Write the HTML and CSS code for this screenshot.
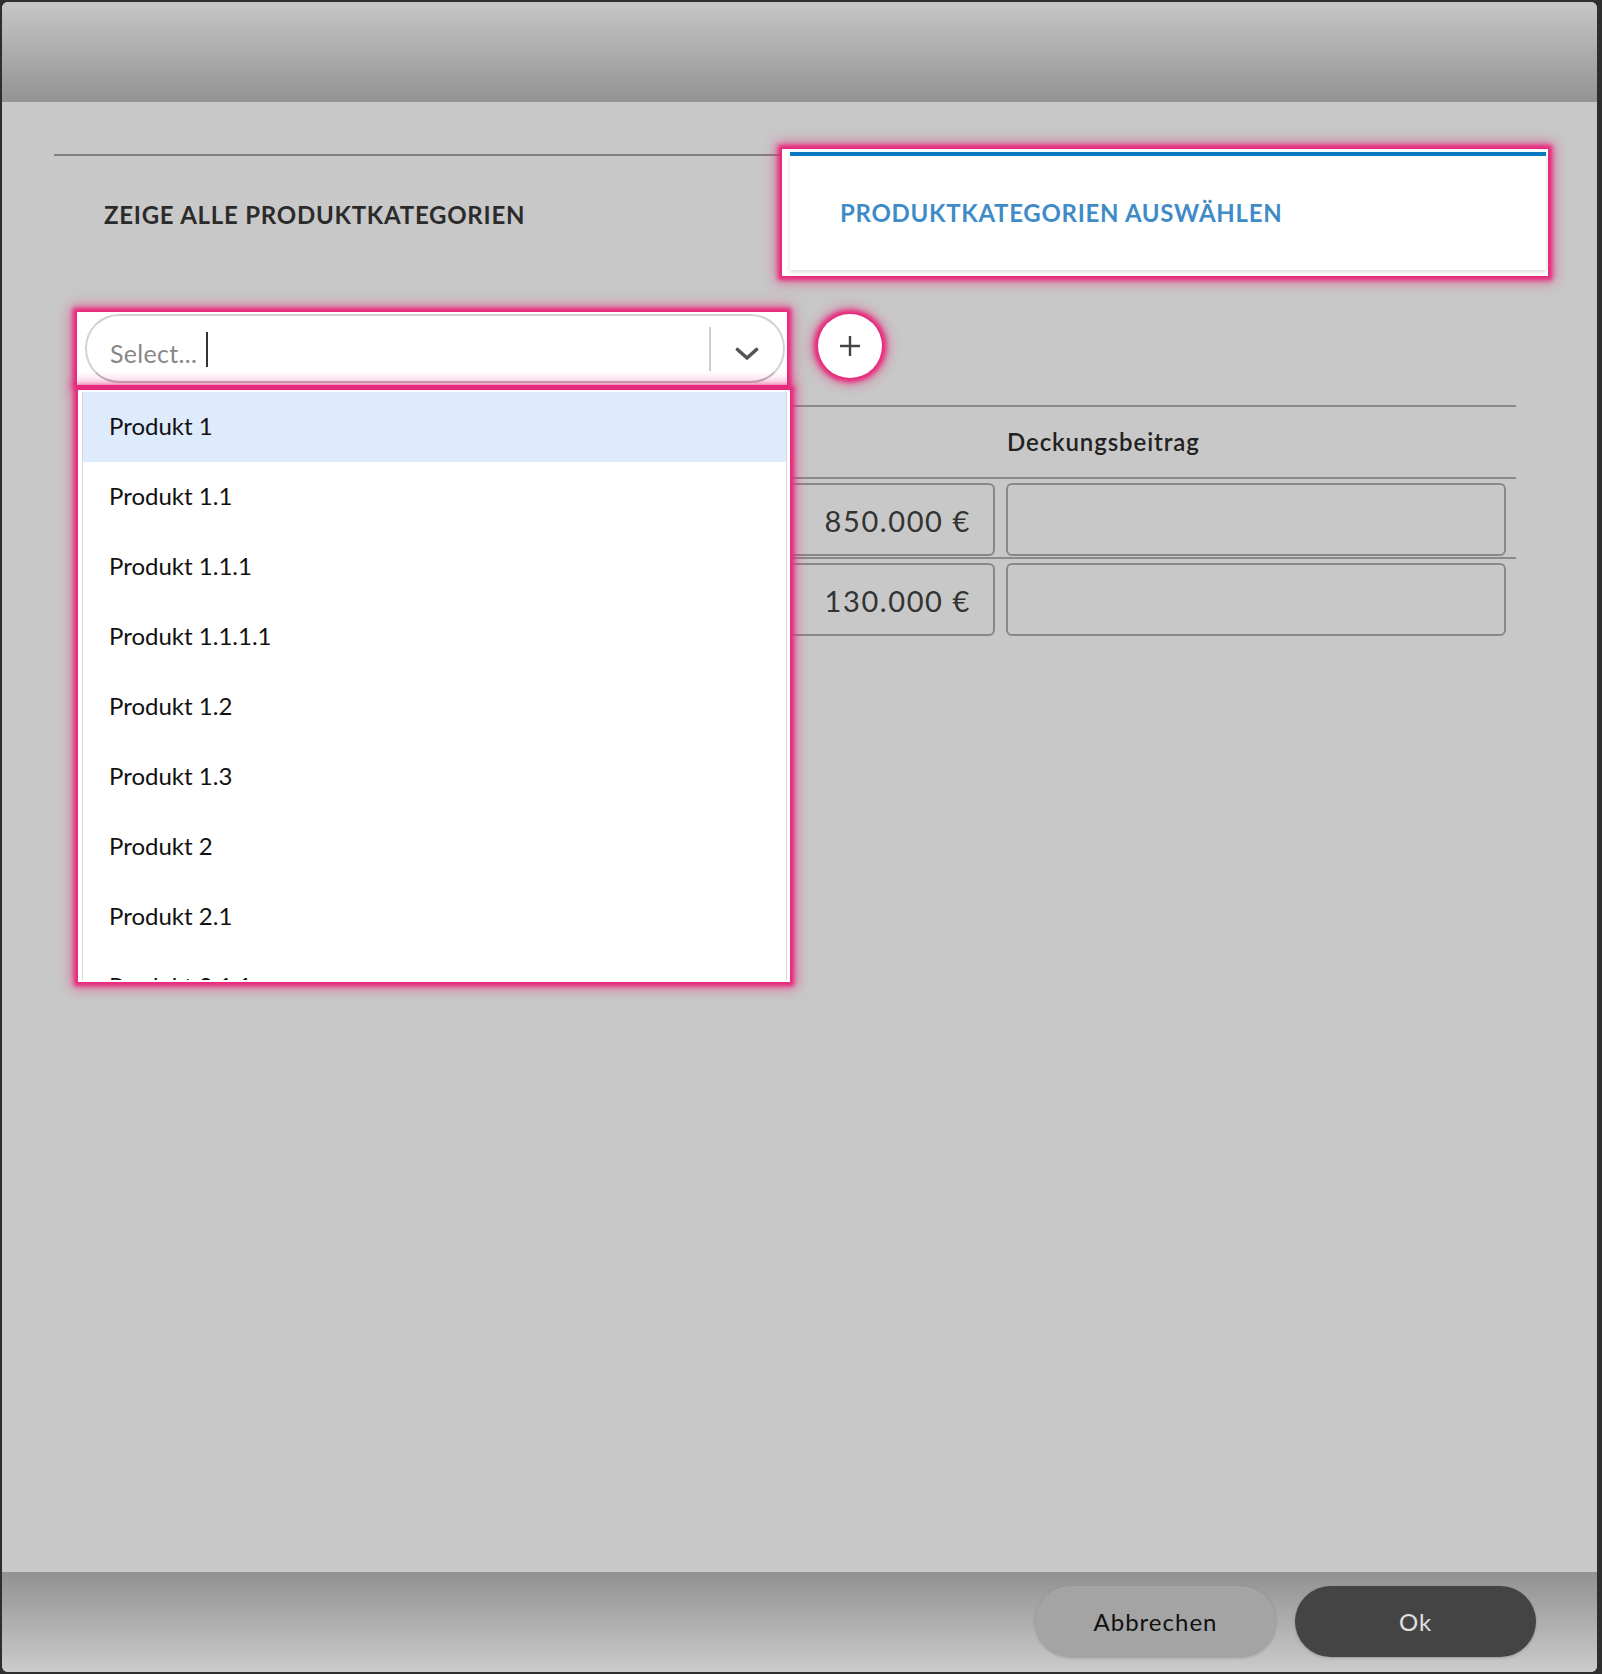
FILE: index.html
```html
<!DOCTYPE html>
<html>
	<head>
		<meta charset="utf-8">
		<title>Produktkategorien</title>
		<link rel="stylesheet" href="styles.css">
	</head>
	<body>
		<div class="Dialog">
			<div class="DialogHead"></div>

			<div class="DialogBody">
				<!-- tabs -->
				<div class="Tabs">
					<div class="Tab">ZEIGE ALLE PRODUKTKATEGORIEN</div>
					<div class="Mark TabMark">
						<div class="Tab TabActive">PRODUKTKATEGORIEN AUSWÄHLEN</div>
					</div>
				</div>

				<!-- select + add -->
				<div class="Picker">
					<div class="SelectWrap">
						<div class="Mark SelectMark">
							<div class="Select">
								<div class="SelectValue">
									<span class="Placeholder">Select...</span>
									<span class="Caret"></span>
								</div>
								<span class="SelectSep"></span>
								<div class="SelectArrow">
									<svg width="24" height="14" viewBox="0 0 24 14">
										<polyline points="2.5,2.5 12,11 21.5,2.5" fill="none" stroke="#555" stroke-width="3.6" stroke-linecap="round" stroke-linejoin="round"/>
									</svg>
								</div>
							</div>
						</div>

						<div class="Mark Menu">
							<div class="MenuList">
								<div class="Option OptionFocus">Produkt 1</div>
								<div class="Option">Produkt 1.1</div>
								<div class="Option">Produkt 1.1.1</div>
								<div class="Option">Produkt 1.1.1.1</div>
								<div class="Option">Produkt 1.2</div>
								<div class="Option">Produkt 1.3</div>
								<div class="Option">Produkt 2</div>
								<div class="Option">Produkt 2.1</div>
								<div class="Option">Produkt 2.1.1</div>
								<div class="Option">Produkt 2.2</div>
							</div>
						</div>
					</div>

					<button class="Mark AddButton">
						<svg width="22" height="22" viewBox="0 0 22 22">
							<path d="M11 1 V21 M1 11 H21" stroke="#444" stroke-width="2.4" fill="none"/>
						</svg>
					</button>
				</div>

				<!-- values -->
				<div class="Grid">
					<div class="GridRow GridHead">
						<div class="Cell"></div>
						<div class="Cell"></div>
						<div class="HeadText">Deckungsbeitrag</div>
					</div>
					<div class="GridRow">
						<div class="Cell"><div class="Field"></div></div>
						<div class="Cell"><div class="Field Amount">850.000 €</div></div>
						<div class="Cell CellLast"><div class="Field"></div></div>
					</div>
					<div class="GridRow GridRowEnd">
						<div class="Cell"><div class="Field"></div></div>
						<div class="Cell"><div class="Field Amount">130.000 €</div></div>
						<div class="Cell CellLast"><div class="Field"></div></div>
					</div>
				</div>
			</div>

			<div class="DialogFoot">
				<button class="FootButton ButtonGrey">Abbrechen</button>
				<button class="FootButton ButtonDark">Ok</button>
			</div>
		</div>
	</body>
</html>
```

FILE: styles.css
```css
body {
	margin: 0;
	background-color: #2e2e2e;
	font-family: Lato, "Open Sans", sans-serif;
	}

.Dialog {
	margin: 2px 0 0 2px;
	width: 1595px;
	height: 1670px;
	border-radius: 6px;
	overflow: hidden;
	display: flex;
	flex-direction: column;
	background-color: #c8c8c8;
	}

.DialogHead {
	height: 100px;
	background: linear-gradient(#c6c6c6, #939393);
	}

.DialogBody {
	flex: 1;
	padding: 47px 49px 0 52px;
	}

/* pink highlight boxes */
.Mark {
	background-color: #fff;
	box-shadow: 0 0 4px 4px #e8287c, 0 0 12px 6px rgba(232,40,124,0.6);
	}

.Tabs {
	display: flex;
	height: 127px;
	}

.Tab {
	flex: 1;
	margin-top: 5px;
	border-top: 2px solid #808080;
	padding: 47px 0 0 50px;
	font-size: 24px;
	line-height: 24px;
	font-weight: 700;
	letter-spacing: 0.75px;
	color: #2b2b2b;
	}

.TabMark {
	width: 756px;
	padding: 3px 2px 6px 8px;
	display: flex;
	}

.TabActive {
	margin-top: 0;
	border-top: 4px solid #0a78c1;
	padding-top: 45px;
	letter-spacing: 0.7px;
	background-color: #fff;
	color: #3f8bc8;
	box-shadow: 0 2px 4px rgba(0,0,0,0.15);
	}

.Picker {
	display: flex;
	margin: 36px 0 0 23px;
	align-items: flex-start;
	}

.SelectWrap {
	position: relative;
	}

.SelectMark {
	width: 700px;
	height: 69px;
	padding: 2px 2px 2px 8px;
	}

.Select {
	height: 65px;
	border: 2px solid #d2d2d2;
	border-bottom-color: #b8b8b8;
	border-radius: 34px;
	display: flex;
	align-items: center;
	}

.SelectValue {
	flex: 1;
	padding: 8px 0 0 23px;
	display: flex;
	align-items: center;
	}

.Placeholder {
	font-size: 25px;
	letter-spacing: 0.3px;
	color: #888;
	}

.Caret {
	width: 2px;
	height: 35px;
	margin: -6px 0 0 9px;
	background-color: #333;
	}

.SelectSep {
	width: 2px;
	height: 44px;
	background-color: #cfcfcf;
	}

.SelectArrow {
	width: 72px;
	display: flex;
	justify-content: center;
	padding-top: 10px;
	}

.Menu {
	position: absolute;
	left: 1px;
	top: 78px;
	width: 712px;
	height: 592px;
	z-index: 2;
	}

.MenuList {
	margin: 2px 3px 0 4px;
	height: 588px;
	overflow: hidden;
	border-left: 1px solid #d6d6d6;
	border-right: 1px solid #d6d6d6;
	}

.Option {
	height: 70px;
	padding-left: 26px;
	font-size: 24px;
	line-height: 68px;
	color: #111;
	}

.OptionFocus {
	background-color: #deebfd;
	}

.AddButton {
	margin: 2px 0 0 31px;
	width: 64px;
	height: 64px;
	border: 0;
	border-radius: 50%;
	padding: 0;
	display: flex;
	align-items: center;
	justify-content: center;
	cursor: pointer;
	}

.Grid {
	margin: 20px 0 0 26px;
	width: 1436px;
	border-top: 2px solid #8a8a8a;
	}

.GridRow {
	display: grid;
	grid-template-columns: 1fr 256px 515px;
	border-bottom: 2px solid #8a8a8a;
	}

.GridRowEnd {
	border-bottom: 0;
	}

.GridHead {
	height: 70px;
	}

.HeadText {
	padding: 20px 0 0 6px;
	font-size: 24px;
	font-weight: 600;
	letter-spacing: 0.9px;
	color: #222;
	}

.Cell {
	padding: 4px 6px 1px 5px;
	}

.CellLast {
	padding-right: 10px;
	}

.Field {
	height: 69px;
	border: 2px solid #888;
	border-radius: 6px;
	}

.Amount {
	text-align: right;
	padding-right: 22px;
	font-size: 29px;
	line-height: 71px;
	letter-spacing: 1.6px;
	color: #333;
	}

.DialogFoot {
	height: 100px;
	background: linear-gradient(#919191, #cbcbcb);
	display: flex;
	justify-content: flex-end;
	gap: 19px;
	padding: 14px 61px 0 0;
	box-sizing: border-box;
	}

.FootButton {
	width: 241px;
	height: 71px;
	border: 0;
	border-radius: 36px;
	font-family: Lato, "Open Sans", sans-serif;
	font-size: 24px;
	letter-spacing: 1px;
	cursor: pointer;
	box-shadow: 0 1px 3px rgba(0,0,0,0.2);
	}

.ButtonGrey {
	background-color: #a4a4a4;
	color: #111;
	}

.ButtonDark {
	background-color: #444;
	color: #e0e0e0;
	}
```
